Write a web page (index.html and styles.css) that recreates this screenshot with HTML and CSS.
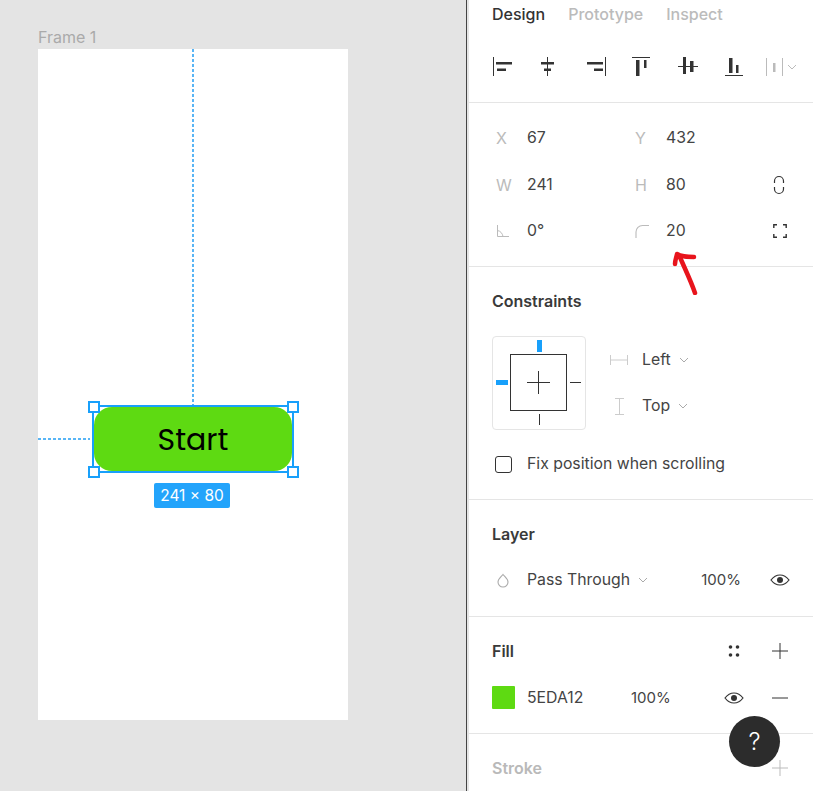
FILE: index.html
```html
<!DOCTYPE html>
<html lang="en">
<head>
    <meta charset="UTF-8">
    <title>Frame 1 - Design</title>
    <link rel="stylesheet" href="styles.css">
</head>
<body>
<div class="app">
    <!-- canvas -->
    <div class="canvas">
        <div class="frame-label">Frame 1</div>
        <div class="frame">
            <div class="guide-v"></div>
            <div class="guide-h"></div>
            <div class="selection">
                <div class="start-btn">Start</div>
                <span class="handle tl"></span>
                <span class="handle tr"></span>
                <span class="handle bl"></span>
                <span class="handle br"></span>
                <div class="size-tag">241 × 80</div>
            </div>
        </div>
    </div>

    <!-- right panel -->
    <div class="panel">
        <section class="sec sec-top">
            <div class="tabs">
                <span class="tab active">Design</span>
                <span class="tab">Prototype</span>
                <span class="tab">Inspect</span>
            </div>
            <div class="align-row">
                <svg class="ic" width="22" height="20" viewBox="0 0 22 20"><path d="M1.500 0v19" stroke="#333" fill="none"/><path d="M4 5h16v2.500H4zM5 11.500h9V14H5z" fill="#333"/></svg>
                <svg class="ic" width="22" height="20" viewBox="0 0 22 20"><path d="M9.500 0v19" stroke="#333" fill="none"/><path d="M3 5h13v2.500H3zM6 11.500h7V14H6z" fill="#333"/></svg>
                <svg class="ic" width="22" height="20" viewBox="0 0 22 20"><path d="M21.500 0v19" stroke="#333" fill="none"/><path d="M3 5h16v2.500H3zM10 11.500h9V14h-9z" fill="#333"/></svg>
                <svg class="ic" width="22" height="20" viewBox="0 0 22 20"><path d="M2 .5h18" stroke="#333" fill="none"/><path d="M6 3h3.500v16H6zM14 3h2.500v8H14z" fill="#333"/></svg>
                <svg class="ic" width="22" height="20" viewBox="0 0 22 20"><path d="M2 9.500h20" stroke="#333" fill="none"/><path d="M7 0h3v17H7zM14 4h3.500v11H14z" fill="#333"/></svg>
                <svg class="ic" width="22" height="20" viewBox="0 0 22 20"><path d="M3 18.500h18" stroke="#333" fill="none"/><path d="M7 1h3.500v15H7zM14 8h2.500v8H14z" fill="#333"/></svg>
                <svg class="ic-dist" width="34" height="20" viewBox="0 0 34 20"><path d="M2.500 1v18M18.500 1v18" stroke="#bbb" fill="none"/><path d="M9 6h2.500v9H9z" fill="#bbb"/><path d="M24 8l4 4 4-4" stroke="#bbb" fill="none"/></svg>
            </div>
        </section>

        <section class="sec sec-geo">
            <div class="geo-row">
                <div class="geo"><span class="geo-key">X</span><span class="val">67</span></div>
                <div class="geo"><span class="geo-key">Y</span><span class="val">432</span></div>
            </div>
            <div class="geo-row">
                <div class="geo"><span class="geo-key">W</span><span class="val">241</span></div>
                <div class="geo"><span class="geo-key">H</span><span class="val">80</span></div>
                <svg class="geo-link" width="14" height="20" viewBox="0 0 14 20"><path d="M2.500 8V6a4.500 4.500 0 0 1 9 0v2M2.500 12v2a4.500 4.500 0 0 0 9 0v-2" stroke="#333" stroke-width="1.200" fill="none"/></svg>
            </div>
            <div class="geo-row">
                <div class="geo">
                    <span class="geo-key"><svg width="14" height="14" viewBox="0 0 14 14"><path d="M1.500 1v11.500H13M1.500 6.500c3 .5 5 3 5.500 6" stroke="#bbb" fill="none"/></svg></span>
                    <span class="val">0°</span>
                </div>
                <div class="geo">
                    <span class="geo-key"><svg width="14" height="14" viewBox="0 0 14 14"><path d="M1 14V8a6.500 6.500 0 0 1 6.500-6.500H14" stroke="#bbb" stroke-width="1.100" fill="none"/></svg></span>
                    <span class="val">20</span>
                </div>
                <svg class="geo-end" width="14" height="14" viewBox="0 0 14 14"><path d="M.8 4V.8H4M10 .8h3.200V4M13.200 10v3.200H10M4 13.200H.8V10" stroke="#333" stroke-width="1.400" fill="none"/></svg>
            </div>
            <svg class="arrow" width="26" height="46" viewBox="0 0 26 46"><path d="M23 44C19 32 13 20 7 6M3 15C3 11 4.500 8 5 5c5 3 10 3 17 3" stroke="#e8141c" stroke-width="4.500" stroke-linecap="round" stroke-linejoin="round" fill="none"/></svg>
        </section>

        <section class="sec sec-cons">
            <h3 class="sec-title">Constraints</h3>
            <div class="cons-row">
                <div class="cons-box">
                    <div class="cons-inner">
                        <span class="plus-h"></span>
                        <span class="plus-v"></span>
                    </div>
                    <span class="tick tick-top"></span>
                    <span class="tick tick-left"></span>
                    <span class="tick tick-right"></span>
                    <span class="tick tick-bottom"></span>
                </div>
                <div class="cons-opts">
                    <div class="cons-opt">
                        <svg width="20" height="12" viewBox="0 0 20 12"><path d="M1.500 1v10M18.500 1v10M1.500 6h17" stroke="#ccc" fill="none"/></svg>
                        <span class="val">Left</span>
                        <svg class="chev" width="10" height="6" viewBox="0 0 10 6"><path d="M1 1l4 4 4-4" stroke="#aaa" fill="none"/></svg>
                    </div>
                    <div class="cons-opt">
                        <svg width="20" height="20" viewBox="0 0 20 20"><path d="M6 2.500h9M6 18.500h9M10.500 2.500v16" stroke="#ccc" fill="none"/></svg>
                        <span class="val">Top</span>
                        <svg class="chev" width="10" height="6" viewBox="0 0 10 6"><path d="M1 1l4 4 4-4" stroke="#aaa" fill="none"/></svg>
                    </div>
                </div>
            </div>
            <label class="fix-row"><span class="check"></span><span class="val">Fix position when scrolling</span></label>
        </section>

        <section class="sec sec-layer">
            <h3 class="sec-title">Layer</h3>
            <div class="layer-row">
                <svg class="drop" width="14" height="16" viewBox="0 0 14 16"><path d="M7 2.500c2 2.500 5 4.500 5 7.500a5 5 0 0 1-10 0c0-3 3-5 5-7.500z" stroke="#aaa" stroke-width="1.100" fill="none"/></svg>
                <span class="val">Pass Through</span>
                <svg class="chev" width="10" height="6" viewBox="0 0 10 6"><path d="M1 1l4 4 4-4" stroke="#aaa" fill="none"/></svg>
                <span class="val pct">100%</span>
                <svg class="eye" width="20" height="12" viewBox="0 0 20 12"><path d="M1 6c2.500-3.300 5.500-5 9-5s6.500 1.700 9 5c-2.500 3.300-5.500 5-9 5s-6.500-1.700-9-5z" stroke="#333" stroke-width="1.200" fill="none"/><circle cx="10" cy="6" r="3" fill="#333"/></svg>
            </div>
        </section>

        <section class="sec sec-fill">
            <div class="title-row">
                <h3 class="sec-title">Fill</h3>
                <svg class="dots" width="12" height="12" viewBox="0 0 12 12"><circle cx="2.500" cy="2" r="1.800" fill="#333"/><circle cx="9.500" cy="2" r="1.800" fill="#333"/><circle cx="2.500" cy="10" r="1.800" fill="#333"/><circle cx="9.500" cy="10" r="1.800" fill="#333"/></svg>
                <svg width="16" height="16" viewBox="0 0 16 16"><path d="M8 0v16M0 8h16" stroke="#333" fill="none"/></svg>
            </div>
            <div class="fill-row">
                <span class="swatch"></span>
                <span class="val hex">5EDA12</span>
                <span class="val pct-fill">100%</span>
                <svg class="eye eye-fill" width="20" height="12" viewBox="0 0 20 12"><path d="M1 6c2.500-3.300 5.500-5 9-5s6.500 1.700 9 5c-2.500 3.300-5.500 5-9 5s-6.500-1.700-9-5z" stroke="#333" stroke-width="1.200" fill="none"/><circle cx="10" cy="6" r="3" fill="#333"/></svg>
                <svg width="16" height="2" viewBox="0 0 16 2"><path d="M0 1h16" stroke="#333" fill="none"/></svg>
            </div>
        </section>

        <section class="sec sec-stroke">
            <div class="title-row">
                <h3 class="sec-title muted">Stroke</h3>
                <svg width="16" height="16" viewBox="0 0 16 16"><path d="M8 0v16M0 8h16" stroke="#bbb" fill="none"/></svg>
            </div>
        </section>

        <div class="help">?</div>
    </div>
</div>
</body>
</html>
```

FILE: styles.css
```css
html, body { margin: 0; padding: 0; }
body { width: 813px; height: 791px; overflow: hidden; font-family: Inter, "Liberation Sans", sans-serif; color: #444; background: #fff; }
svg { display: block; flex: none; }

.app { display: flex; height: 791px; }

/* canvas */
.canvas { width: 428px; flex: none; background: #e4e4e4; border-right: 1px solid #444; padding: 27px 0 0 38px; }
.frame-label { font-size: 16px; line-height: 20px; color: #aaa; height: 22px; }
.frame { position: relative; width: 310px; height: 671px; background: #fff; }
.guide-v { position: absolute; left: 154px; top: 0; width: 2px; height: 356px; background: repeating-linear-gradient(to bottom, #59b5f5 0 3px, transparent 3px 5px); }
.guide-h { position: absolute; left: 0; top: 389px; width: 52px; height: 2px; background: repeating-linear-gradient(to right, #59b5f5 0 3px, transparent 3px 5px); }
.selection { position: absolute; left: 54px; top: 356px; width: 198px; height: 64px; border: 2px solid #18a0fb; border-radius: 3px; }
.start-btn { height: 64px; background: #5eda12; border-radius: 18px; font-family: Poppins, Lato, "Open Sans", sans-serif; font-size: 30px; line-height: 66px; text-align: center; color: #000; }
.handle { position: absolute; width: 8px; height: 8px; background: #fff; border: 2px solid #18a0fb; }
.tl { left: -6px; top: -6px; }
.tr { right: -7px; top: -6px; }
.bl { left: -6px; bottom: -7px; }
.br { right: -7px; bottom: -7px; }
.size-tag { position: absolute; left: 60px; top: 76px; width: 76px; height: 25px; background: #18a0fb; border-radius: 2px; color: #fff; font-size: 15.500px; line-height: 25px; text-align: center; opacity: .95; }

/* right panel */
.panel { position: relative; width: 344px; min-width: 0; flex: none; border-left: 2px solid #e5e5e5; font-size: 14px; }
.sec { border-bottom: 1px solid #e5e5e5; padding: 0 23px; box-sizing: border-box; position: relative; }
.val { font-size: 15.800px; line-height: 20px; color: #444; }
.sec-title { margin: 0; font-size: 16px; line-height: 20px; font-weight: 600; color: #3a3a3a; }
.sec-title.muted { color: #b9b9b9; }

.sec-top { height: 103px; padding-top: 4px; }
.tabs { display: flex; gap: 23px; height: 20px; }
.tab { font-size: 16px; line-height: 20px; font-weight: 500; color: #bbb; }
.tab.active { color: #333; }
.align-row { display: flex; margin-top: 33px; }
.align-row .ic { margin-right: 24px; }
.ic-dist { margin-left: -4px; }

.sec-geo { height: 164px; padding-top: 12px; padding-left: 27px; }
.geo-row { display: flex; align-items: center; height: 46.500px; }
.geo { display: flex; align-items: center; width: 139px; }
.geo-key { width: 31px; font-size: 16px; line-height: 18px; color: #bbb; display: flex; }
.geo-link { margin-left: -2px; }
.geo-end { margin-left: -1px; }
.arrow { position: absolute; left: 203px; top: 146px; }

.sec-cons { height: 233px; padding-top: 24px; }
.cons-row { display: flex; margin-top: 25px; }
.cons-box { position: relative; flex: none; width: 92px; height: 92px; border: 1px solid #e5e5e5; border-radius: 4px; }
.cons-inner { position: absolute; left: 17px; top: 17px; width: 55px; height: 55px; border: 1px solid #333; }
.plus-h { position: absolute; left: 16px; top: 27px; width: 23px; height: 1px; background: #333; }
.plus-v { position: absolute; left: 27px; top: 16px; width: 1px; height: 23px; background: #333; }
.tick { position: absolute; background: #333; }
.tick-top { left: 44px; top: 3px; width: 5px; height: 12px; background: #18a0fb; }
.tick-left { left: 3px; top: 43px; width: 12px; height: 5px; background: #18a0fb; }
.tick-right { left: 77px; top: 45px; width: 11px; height: 1px; }
.tick-bottom { left: 46px; top: 77px; width: 1px; height: 11px; }
.cons-opts { margin-left: 23px; padding-top: 14px; }
.cons-opt { display: flex; align-items: center; height: 20px; }
.cons-opt + .cons-opt { margin-top: 26px; }
.cons-opt .val { margin-left: 13px; }
.cons-opt .chev { margin-left: 8px; }
.fix-row { display: flex; align-items: center; margin-top: 24px; padding-left: 3px; }
.check { width: 15px; height: 15px; border: 1px solid #333; border-radius: 3px; margin-right: 15px; }

.sec-layer { height: 117px; padding-top: 24px; }
.layer-row { display: flex; align-items: center; margin-top: 26px; padding-left: 4px; }
.drop { margin-right: 17px; }
.layer-row .chev { margin-left: 8px; }
.pct { margin-left: auto; font-size: 15px; }
.layer-row .eye { margin-left: 29px; }

.sec-fill { height: 117px; padding-top: 24px; }
.title-row { display: flex; align-items: center; padding-right: 2px; }
.title-row .sec-title { flex: 1; }
.dots { margin-right: 32px; }
.fill-row { display: flex; align-items: center; margin-top: 25px; padding-right: 2px; }
.swatch { width: 23px; height: 23px; background: #5eda12; border-radius: 1px; margin-right: 12px; }
.hex { width: 104px; }
.pct-fill { font-size: 15px; }
.eye-fill { margin-left: auto; margin-right: 28px; }

.sec-stroke { border-bottom: 0; padding-top: 24px; }

.help { position: absolute; left: 260px; top: 716px; width: 51px; height: 51px; border-radius: 50%; background: #2c2c2c; color: #fff; font-size: 24px; font-weight: 300; line-height: 51px; text-align: center; }
```
